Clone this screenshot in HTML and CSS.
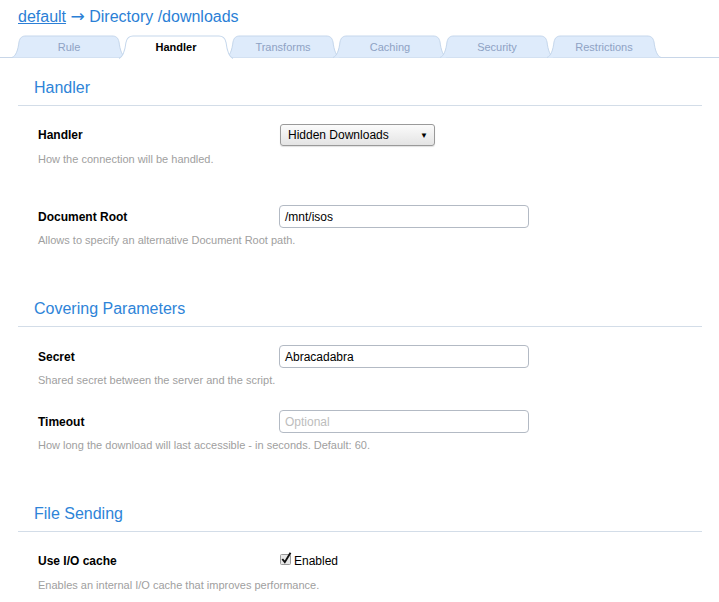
FILE: index.html
```html
<!DOCTYPE html>
<html>
<head>
<meta charset="utf-8">
<link rel="stylesheet" href="styles.css">
</head>
<body>
<h1 class="title"><a class="title-link" href="#">default</a> <span class="title-arrow">→</span> Directory /downloads</h1>
<ul class="tabs">
  <li class="tab"><svg class="tab-bg" viewBox="0 0 114 23" preserveAspectRatio="none"><path d="M0,22.5 C4,21 6,15 7,7 C8,2.5 10,1 14,1 L100,1 C104,1 106,2.5 107,7 C108,15 110,21 114,22.5"/></svg><span class="tab-text">Rule</span></li>
  <li class="tab tab-active"><svg class="tab-bg" viewBox="0 0 114 23" preserveAspectRatio="none"><path d="M0,22.5 C4,21 6,15 7,7 C8,2.5 10,1 14,1 L100,1 C104,1 106,2.5 107,7 C108,15 110,21 114,22.5"/></svg><span class="tab-text">Handler</span></li>
  <li class="tab"><svg class="tab-bg" viewBox="0 0 114 23" preserveAspectRatio="none"><path d="M0,22.5 C4,21 6,15 7,7 C8,2.5 10,1 14,1 L100,1 C104,1 106,2.5 107,7 C108,15 110,21 114,22.5"/></svg><span class="tab-text">Transforms</span></li>
  <li class="tab"><svg class="tab-bg" viewBox="0 0 114 23" preserveAspectRatio="none"><path d="M0,22.5 C4,21 6,15 7,7 C8,2.5 10,1 14,1 L100,1 C104,1 106,2.5 107,7 C108,15 110,21 114,22.5"/></svg><span class="tab-text">Caching</span></li>
  <li class="tab"><svg class="tab-bg" viewBox="0 0 114 23" preserveAspectRatio="none"><path d="M0,22.5 C4,21 6,15 7,7 C8,2.5 10,1 14,1 L100,1 C104,1 106,2.5 107,7 C108,15 110,21 114,22.5"/></svg><span class="tab-text">Security</span></li>
  <li class="tab"><svg class="tab-bg" viewBox="0 0 114 23" preserveAspectRatio="none"><path d="M0,22.5 C4,21 6,15 7,7 C8,2.5 10,1 14,1 L100,1 C104,1 106,2.5 107,7 C108,15 110,21 114,22.5"/></svg><span class="tab-text">Restrictions</span></li>
</ul>

<section class="section">
  <h2 class="section-title">Handler</h2>
  <div class="field">
    <div class="row">
      <label class="label">Handler</label>
      <div class="select"><span>Hidden Downloads</span><span class="arrow">▼</span></div>
    </div>
    <div class="desc">How the connection will be handled.</div>
  </div>
  <div class="field field-wide">
    <div class="row">
      <label class="label">Document Root</label>
      <div class="input">/mnt/isos</div>
    </div>
    <div class="desc">Allows to specify an alternative Document Root path.</div>
  </div>
</section>

<section class="section">
  <h2 class="section-title">Covering Parameters</h2>
  <div class="field">
    <div class="row">
      <label class="label">Secret</label>
      <div class="input">Abracadabra</div>
    </div>
    <div class="desc">Shared secret between the server and the script.</div>
  </div>
  <div class="field">
    <div class="row">
      <label class="label">Timeout</label>
      <div class="input input-placeholder">Optional</div>
    </div>
    <div class="desc">How long the download will last accessible - in seconds. Default: 60.</div>
  </div>
</section>

<section class="section">
  <h2 class="section-title">File Sending</h2>
  <div class="field">
    <div class="row">
      <label class="label">Use I/O cache</label>
      <div class="check">
        <svg class="checkbox" width="14" height="14" viewBox="0 0 14 14">
          <rect x="0.5" y="2.5" width="10" height="10" rx="1" fill="#e8e8e8" stroke="#9a9a9a"/>
          <path d="M2.3,7 L4.8,10.2 L10.5,0.8" fill="none" stroke="#111" stroke-width="1.9"/>
        </svg>
        <span class="check-text">Enabled</span>
      </div>
    </div>
    <div class="desc">Enables an internal I/O cache that improves performance.</div>
  </div>
</section>
</body>
</html>
```

FILE: styles.css
```css
* { box-sizing: border-box; }
body {
  margin: 0;
  font-family: "Liberation Sans", Arial, sans-serif;
  background: #fff;
  color: #000;
}
.title {
  margin: 0;
  padding: 7px 0 0 18px;
  font-size: 16px;
  line-height: 20px;
  font-weight: normal;
  color: #2b7fd6;
}
.title-link { color: #2b7fd6; text-decoration: underline; }
.title-arrow { font-family: "DejaVu Sans", sans-serif; font-size: 17px; line-height: 16px; }

.tabs {
  list-style: none;
  margin: 8px 0 0 0;
  padding: 0 0 0 12px;
  display: flex;
  height: 23px;
  border-bottom: 1px solid #c8d6e8;
}
.tab {
  position: relative;
  width: 114px;
  height: 23px;
  margin-right: -7px;
  display: flex;
  align-items: center;
  justify-content: center;
  font-size: 11px;
  color: #8ea2c4;
}
.tab-bg {
  position: absolute;
  left: 0; top: 0;
  width: 114px; height: 23px;
  overflow: visible;
}
.tab-bg path { fill: #deebfb; stroke: #c5d7ec; stroke-width: 1; }
.tab-text { position: relative; padding-top: 1px; }
.tab-active { z-index: 2; color: #000; font-weight: bold; }
.tab-active .tab-bg { height: 24px; }
.tab-active .tab-bg path { fill: #fff; }

.section { margin: 0 17px 0 18px; }
.section-title {
  margin: 19px 0 0 0;
  padding: 1px 0 7px 16px;
  font-size: 16px;
  line-height: 20px;
  font-weight: normal;
  color: #2e84d8;
  border-bottom: 1px solid #d3dde8;
}
.section + .section .section-title { margin-top: 51px; }
.field { padding-left: 20px; margin-top: 23px; }
.section-title + .field { margin-top: 18px; }
.field-wide { margin-top: 39px; }
.row {
  display: grid;
  grid-template-columns: 242px auto;
  align-items: center;
  height: 22px;
}
.label { font-size: 12px; font-weight: bold; }
.desc {
  margin-top: 6px;
  font-size: 11px;
  line-height: 14px;
  color: #a0a0a0;
}
.select {
  width: 155px;
  height: 22px;
  border: 1px solid #9a9a9a;
  border-radius: 3px;
  background: linear-gradient(#fbfbfb, #e4e4e4);
  box-shadow: 0 1px 1px rgba(0,0,0,0.12);
  display: flex;
  align-items: center;
  justify-content: space-between;
  padding: 0 6px 0 7px;
  font-size: 12px;
}
.arrow { font-size: 8px; }
.input {
  margin-left: -1px;
  width: 250px;
  height: 23px;
  border: 1px solid #b3bac4;
  border-radius: 4px;
  display: flex;
  align-items: center;
  padding-left: 5px;
  font-size: 12px;
  color: #000;
}
.input-placeholder { color: #bdbdbd; }
.check { display: flex; align-items: center; }
.checkbox { display: block; margin-top: -4px; }
.check-text { font-size: 12px; margin-left: 0; }
```
